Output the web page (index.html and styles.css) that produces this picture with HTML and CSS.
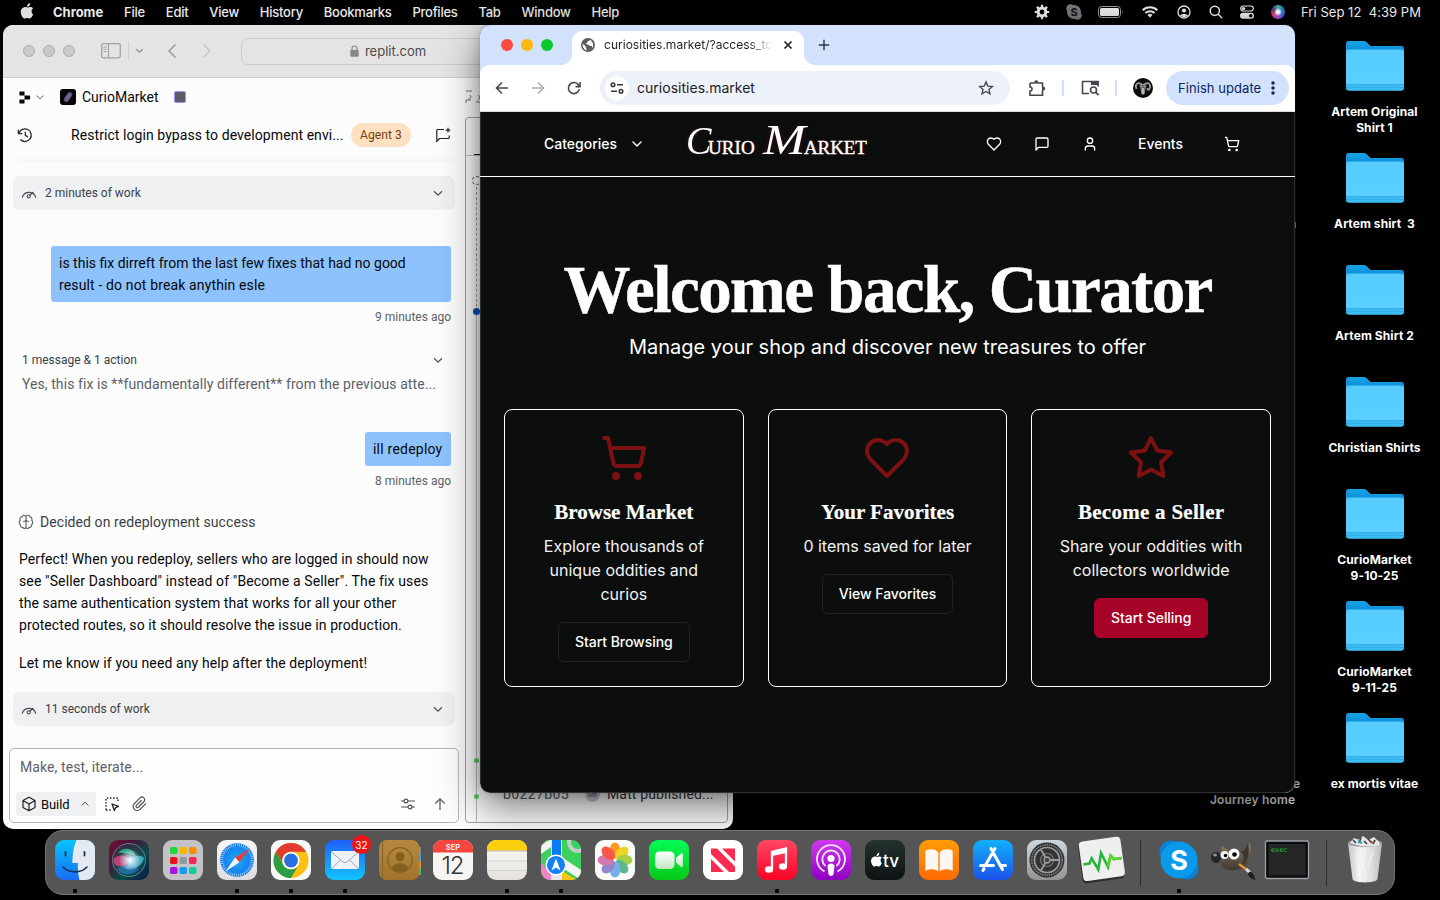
FILE: index.html
```html
<!DOCTYPE html>
<html lang="en">
<head>
<meta charset="utf-8">
<title>Desktop</title>
<link rel="stylesheet" href="styles.css">
</head>
<body>
<svg class="defs" width="0" height="0">
  <defs>
    <linearGradient id="gFolder" x1="0" y1="0" x2="0" y2="1"><stop offset="0" stop-color="#56ccff"/><stop offset="1" stop-color="#5ad0ff"/></linearGradient>
    <linearGradient id="gFolderBack" x1="0" y1="0" x2="0" y2="1"><stop offset="0" stop-color="#15a5e8"/><stop offset="1" stop-color="#0a7fd0"/></linearGradient>
    <linearGradient id="gFinder" x1="0" y1="0" x2="0" y2="1"><stop offset="0" stop-color="#06c5fb"/><stop offset="1" stop-color="#1a6bf5"/></linearGradient>
    <linearGradient id="gSilver" x1="0" y1="0" x2="0" y2="1"><stop offset="0" stop-color="#f7f7f7"/><stop offset="1" stop-color="#dcdde0"/></linearGradient>
    <linearGradient id="gMail" x1="0" y1="0" x2="0" y2="1"><stop offset="0" stop-color="#1e60f5"/><stop offset="1" stop-color="#12c4fd"/></linearGradient>
    <linearGradient id="gSky" x1="0" y1="0" x2="0" y2="1"><stop offset="0" stop-color="#11b0fb"/><stop offset="1" stop-color="#1c52ea"/></linearGradient>
    <linearGradient id="gGreen" x1="0" y1="0" x2="0" y2="1"><stop offset="0" stop-color="#06fb57"/><stop offset="1" stop-color="#06c917"/></linearGradient>
    <linearGradient id="gMusic" x1="0" y1="0" x2="0" y2="1"><stop offset="0" stop-color="#fd4864"/><stop offset="1" stop-color="#fa0326"/></linearGradient>
    <linearGradient id="gPod" x1="0" y1="0" x2="0" y2="1"><stop offset="0" stop-color="#cf39ee"/><stop offset="1" stop-color="#8f02c0"/></linearGradient>
    <linearGradient id="gTv" x1="0" y1="0" x2="0" y2="1"><stop offset="0" stop-color="#23332f"/><stop offset="1" stop-color="#0d1113"/></linearGradient>
    <linearGradient id="gBooks" x1="0" y1="0" x2="0" y2="1"><stop offset="0" stop-color="#ff9d05"/><stop offset="1" stop-color="#ff6a05"/></linearGradient>
    <linearGradient id="gGear" x1="0" y1="0" x2="0" y2="1"><stop offset="0" stop-color="#cbd7e0"/><stop offset="1" stop-color="#959493"/></linearGradient>
    <linearGradient id="gNotes" x1="0" y1="0" x2="0" y2="1"><stop offset="0" stop-color="#fbfbf9"/><stop offset="1" stop-color="#e5e2dc"/></linearGradient>
    <linearGradient id="gWhite" x1="0" y1="0" x2="0" y2="1"><stop offset="0" stop-color="#ffffff"/><stop offset="1" stop-color="#c2e6c4"/></linearGradient>
    <linearGradient id="gContacts" x1="0" y1="0" x2="0" y2="1"><stop offset="0" stop-color="#b5893f"/><stop offset="1" stop-color="#a0742c"/></linearGradient>
    <radialGradient id="gCompass"><stop offset="0" stop-color="#1caafa"/><stop offset="1" stop-color="#1479ea"/></radialGradient>
    <linearGradient id="gSiri" x1="0" y1="0" x2="1" y2="1"><stop offset="0" stop-color="#7a1038"/><stop offset=".3" stop-color="#4a1238"/><stop offset=".62" stop-color="#0b4a48"/><stop offset="1" stop-color="#0a1748"/></linearGradient>
    <radialGradient id="gGlow"><stop offset="0" stop-color="#fff"/><stop offset=".35" stop-color="#dff6ff" stop-opacity=".75"/><stop offset="1" stop-color="#fff" stop-opacity="0"/></radialGradient>
    <linearGradient id="gGimp" x1="0" y1="0" x2="0" y2="1"><stop offset="0" stop-color="#8b8069"/><stop offset="1" stop-color="#3e382d"/></linearGradient>
    <linearGradient id="gTrash" x1="0" y1="0" x2="1" y2="0"><stop offset="0" stop-color="#c5c6c9"/><stop offset=".35" stop-color="#f4f4f4"/><stop offset=".7" stop-color="#dedee0"/><stop offset="1" stop-color="#b9babd"/></linearGradient>
    <clipPath id="cIcon"><rect width="40" height="40" rx="9"/></clipPath>
    <symbol id="folder" viewBox="0 0 60 52">
      <path d="M1 12V4a3 3 0 0 1 3-3h14c2 0 3 .6 4.200 1.700l2.600 2.500c.8.700 1.600.9 2.700.9H56a3 3 0 0 1 3 3V16H1z" fill="url(#gFolderBack)"/>
      <path d="M1 12a2.500 2.500 0 0 1 2.500-2.500h53A2.500 2.500 0 0 1 59 12v35.500a3 3 0 0 1-3 3H4a3 3 0 0 1-3-3z" fill="url(#gFolder)"/>
      <path d="M1 44h58v3.500a3 3 0 0 1-3 3H4a3 3 0 0 1-3-3z" fill="#3cbaf2"/>
      <path d="M1 44.500h58M1 47.500h58" stroke="#2fabe5" stroke-width=".8"/>
    </symbol>
    <symbol id="chev" viewBox="0 0 24 24"><path d="m4 8.500 8 8 8-8" fill="none" stroke="currentColor" stroke-width="2.300"/></symbol>
    <symbol id="gauge" viewBox="0 0 16 16"><path d="M1.300 12.300A7 7 0 0 1 14.700 12.300M8.800 10.300l3.300-3" fill="none" stroke="currentColor" stroke-width="1.200" stroke-linecap="round"/><circle cx="7.700" cy="11.300" r="1.600" fill="none" stroke="currentColor" stroke-width="1.100"/></symbol>
    <symbol id="cart" viewBox="0 0 24 24"><g fill="none" stroke="currentColor" stroke-width="2" stroke-linecap="round" stroke-linejoin="round"><circle cx="8" cy="21" r="1"/><circle cx="19" cy="21" r="1"/><path d="M2.050 2.050h2l2.660 12.420a2 2 0 0 0 2 1.580h9.780a2 2 0 0 0 1.950-1.570l1.650-7.430H5.120"/></g></symbol>
    <symbol id="heart" viewBox="0 0 24 24"><path d="M19 14c1.490-1.460 3-3.210 3-5.500A5.500 5.500 0 0 0 16.500 3c-1.760 0-3 .5-4.500 2-1.500-1.500-2.740-2-4.500-2A5.500 5.500 0 0 0 2 8.500c0 2.300 1.500 4.050 3 5.500l7 7Z" fill="none" stroke="currentColor" stroke-width="2" stroke-linecap="round" stroke-linejoin="round"/></symbol>
    <symbol id="star" viewBox="0 0 24 24"><path d="m12 2 3.090 6.260L22 9.270l-5 4.870 1.180 6.880L12 17.770l-6.180 3.250L7 14.140 2 9.270l6.910-1.010z" fill="none" stroke="currentColor" stroke-width="2" stroke-linecap="round" stroke-linejoin="round"/></symbol>
    <symbol id="apple" viewBox="0 0 14 17"><path d="M11.600 9c0-1.700 1.300-2.500 1.400-2.600-.8-1.200-2-1.300-2.500-1.300-1-.1-2 .6-2.600.6-.5 0-1.300-.6-2.200-.6C3 5.200.8 7 .8 9.900c0 3 2.200 6.600 3.900 6.600.9 0 1.300-.6 2.500-.6s1.500.6 2.500.6c1.400 0 2.900-2.700 3.400-4-.1 0-1.500-.7-1.500-3.500zM9.400 3.700C10 3 10.300 2 10.200.9c-.9.100-1.800.6-2.300 1.300-.6.700-1 1.600-.9 2.500.9.100 1.800-.4 2.400-1z" fill="currentColor"/></symbol>
  </defs>
</svg>

<div class="desktop">
  <header class="menubar">
    <svg class="apple"><use href="#apple"/></svg>
    <nav class="menus">
      <b>Chrome</b><span>File</span><span>Edit</span><span>View</span><span>History</span><span>Bookmarks</span><span>Profiles</span><span>Tab</span><span>Window</span><span>Help</span>
    </nav>
    <div class="status">
      <svg class="s1" width="16" height="16" viewBox="0 0 16 16"><circle cx="8" cy="8" r="3.900" fill="none" stroke="#e6e6e6" stroke-width="3"/><path d="M8 .8v14.400M.8 8h14.400M2.900 2.900l10.200 10.200M13.100 2.900 2.900 13.100" stroke="#e6e6e6" stroke-width="2.200"/><circle cx="8" cy="8" r="2.400" fill="#000"/></svg>
      <svg class="s2" width="16" height="16" viewBox="0 0 16 16"><circle cx="8" cy="8" r="7" fill="#777"/><circle cx="4.500" cy="4.500" r="4.200" fill="#777"/><circle cx="11.500" cy="11.500" r="4.200" fill="#777"/><text x="8" y="12" text-anchor="middle" class="skype-mini">S</text></svg>
      <svg class="s3" width="25" height="12" viewBox="0 0 25 12"><rect x=".5" y=".5" width="22" height="11" rx="3" fill="none" stroke="#999"/><rect x="2" y="2" width="19" height="8" rx="1.500" fill="#e6e6e6"/><path d="M24 4v4q1.200-2 0-4" fill="#999"/></svg>
      <svg class="s4" width="16" height="12" viewBox="0 0 16 12"><g fill="none" stroke="#e6e6e6" stroke-width="2"><path d="M.7 4.200a10.500 10.500 0 0 1 14.600 0M3.400 7a6.600 6.600 0 0 1 9.200 0"/></g><path d="M5.500 9a3.600 3.600 0 0 1 5 0L8 11.700z" fill="#e6e6e6"/></svg>
      <svg class="s5" width="14" height="14" viewBox="0 0 14 14"><circle cx="7" cy="7" r="6" fill="none" stroke="#e6e6e6" stroke-width="1.300"/><circle cx="7" cy="5.500" r="2.100" fill="#e6e6e6"/><path d="M3 10.600a4.500 3.500 0 0 1 8 0A6 6 0 0 1 3 10.600" fill="#e6e6e6"/></svg>
      <svg class="s6" width="14" height="14" viewBox="0 0 14 14"><g fill="none" stroke="#e6e6e6" stroke-width="1.500"><circle cx="5.800" cy="5.800" r="4.600"/><path d="m9.200 9.200 4 4"/></g></svg>
      <svg class="s7" width="14" height="14" viewBox="0 0 14 14"><rect x=".7" y="1" width="12.600" height="5" rx="2.500" fill="none" stroke="#e6e6e6" stroke-width="1.200"/><circle cx="3.500" cy="3.500" r="1.600" fill="#e6e6e6"/><rect x="0" y="7.800" width="14" height="6" rx="3" fill="#e6e6e6"/><circle cx="10.800" cy="10.800" r="1.800" fill="#000"/></svg>
      <i class="siri-mini"></i>
      <span class="clock">Fri Sep 12&nbsp; 4:39 PM</span>
    </div>
  </header>

  <div class="peek peek-n">n</div>
  <div class="peek peek-e">e</div>
  <div class="peek peek-j">Journey home</div>
  <aside class="files">
    <div class="file"><svg><use href="#folder"/></svg><span>Artem Original<br>Shirt 1</span></div>
    <div class="file"><svg><use href="#folder"/></svg><span>Artem shirt&nbsp; 3</span></div>
    <div class="file"><svg><use href="#folder"/></svg><span>Artem Shirt 2</span></div>
    <div class="file"><svg><use href="#folder"/></svg><span>Christian Shirts</span></div>
    <div class="file"><svg><use href="#folder"/></svg><span>CurioMarket<br>9-10-25</span></div>
    <div class="file"><svg><use href="#folder"/></svg><span>CurioMarket<br>9-11-25</span></div>
    <div class="file"><svg><use href="#folder"/></svg><span>ex mortis vitae</span></div>
  </aside>

  <section class="safari">
    <div class="safari-bar">
      <i class="dot"></i><i class="dot"></i><i class="dot"></i>
      <svg class="sidebar-ic" width="20" height="16" viewBox="0 0 20 16"><rect x=".7" y=".7" width="18.600" height="14.200" rx="1.800" fill="none" stroke="#a2a2a2" stroke-width="1.300"/><path d="M7.500 1v14" stroke="#a2a2a2" stroke-width="1.200"/><path d="M2.600 4h3M2.600 6.300h3M2.600 8.600h3" stroke="#a2a2a2"/></svg>
      <i class="vline"></i>
      <svg class="mini-chev" width="9" height="12"><path d="m1.200 4 3.300 3.200L7.800 4" fill="none" stroke="#999" stroke-width="1.500"/></svg>
      <svg class="nav-b" width="10" height="16"><path d="M8.500 1.500 2 8l6.500 6.500" fill="none" stroke="#999" stroke-width="1.500"/></svg>
      <svg class="nav-f" width="10" height="16"><path d="M1.500 1.500 8 8l-6.500 6.500" fill="none" stroke="#c4c4c4" stroke-width="1.500"/></svg>
      <div class="safari-url"><svg width="9" height="12" viewBox="0 0 9 12"><rect x=".3" y="5" width="8.400" height="6.800" rx="1.200" fill="#868686"/><path d="M2 5.500V3.500a2.500 2.500 0 0 1 5 0v2" fill="none" stroke="#868686" stroke-width="1.200"/></svg>replit.com</div>
    </div>
    <div class="workspace">
      <div class="chat">
        <div class="ws-head">
          <svg width="12" height="13" viewBox="0 0 12 13"><path d="M1 .5h4.500v4H1a.6.600 0 0 1-.6-.6V1.100A.6.600 0 0 1 1 .5zM5.500 4.500h5a.6.600 0 0 1 .6.600v2.800a.6.600 0 0 1-.6.600h-5zM1 8.500h4.500v4H1a.6.600 0 0 1-.6-.6V9.100a.6.600 0 0 1 .6-.6z" fill="#050608"/></svg>
          <svg class="c1" width="10" height="10"><use href="#chev"/></svg>
          <svg class="app-ic" width="16" height="16" viewBox="0 0 16 16"><rect width="16" height="16" rx="3" fill="#050506"/><g transform="rotate(35 8 8)"><rect x="5.600" y="2.500" width="5" height="11" rx="2.500" fill="#5c4d7d"/><path d="M8 3.500v9M6.600 5v6M9.500 5v6" stroke="#9b8bbb" stroke-width=".5"/></g></svg>
          <span class="app-name">CurioMarket</span>
          <i class="stop"></i>
        </div>
        <div class="thread-head">
          <svg width="16" height="16" viewBox="0 0 24 24"><g fill="none" stroke="#24272c" stroke-width="1.900"><path d="M2 4v6h6M2.800 9.500A9.500 9.500 0 1 1 5 18.800M12.500 7v5.500l4 2.500"/></g></svg>
          <span class="thread-title">Restrict login bypass to development envi...</span>
          <span class="agent">Agent 3</span>
          <svg class="newchat" width="16" height="16" viewBox="0 0 16 16"><path d="M9 2.500H2.800a1 1 0 0 0-1 1v10.700l2.600-2.700h8.800a1 1 0 0 0 1-1V8.500M13 .8v4.600M10.700 3.100h4.600" fill="none" stroke="#202328" stroke-width="1.200"/></svg>
        </div>
        <div class="scroll-edge"></div>
        <div class="work"><svg><use href="#gauge"/></svg><span class="w1">2 minutes of work</span><svg class="wc"><use href="#chev"/></svg></div>
        <div class="bubble">is this fix dirreft from the last few fixes that had no good<br><span class="b2">result - do not break anythin esle</span></div>
        <div class="ago">9 minutes ago</div>
        <div class="actions"><span>1 message &amp; 1 action</span><svg><use href="#chev"/></svg></div>
        <div class="preview">Yes, this fix is **fundamentally different** from the previous atte...</div>
        <div class="bubble small">ill redeploy</div>
        <div class="ago">8 minutes ago</div>
        <div class="decided"><svg width="16" height="16" viewBox="0 0 16 16"><g fill="none" stroke="#5a5e66" stroke-width="1.100"><path d="M8 2.500v11M8 2.500C7.300.7 4.500.8 4 2.900 2.200 3.200 1.600 5 2.300 6.300.8 7.400.9 9.800 2.400 10.700 2 12.500 3.600 13.900 5 13.500c.8 1.500 2.500 1.300 3 0M8 2.500c.7-1.800 3.500-1.700 4 .4 1.800.3 2.400 2.100 1.700 3.400 1.500 1.100 1.400 3.500-.1 4.400.4 1.800-1.200 3.200-2.600 2.800-.8 1.500-2.500 1.300-3 0M5 7.500c1.500 0 2.500-.5 3-1.500.5 1 1.500 1.500 3 1.500"/></g></svg>Decided on redeployment success</div>
        <div class="reply">
          <p><span class="r1">Perfect! When you redeploy, sellers who are logged in should now</span><br><span class="r2">see "Seller Dashboard" instead of "Become a Seller". The fix uses</span><br><span class="r3">the same authentication system that works for all your other</span><br><span class="r1">protected routes, so it should resolve the issue in production.</span></p>
          <p class="r5">Let me know if you need any help after the deployment!</p>
        </div>
        <div class="work second"><svg><use href="#gauge"/></svg><span>11 seconds of work</span><svg class="wc"><use href="#chev"/></svg></div>
        <div class="composer">
          <div class="ph">Make, test, iterate...</div>
          <div class="tools">
            <span class="build"><svg width="16" height="16" viewBox="0 0 16 16"><path d="M8 1.200 14 4.500v7L8 14.800 2 11.500v-7zM2 4.500 8 8l6-3.500M8 8v6.800" fill="none" stroke="#1c1f24" stroke-width="1.200" stroke-linejoin="round"/></svg><em>Build</em><svg class="up" width="10" height="10"><use href="#chev"/></svg></span>
            <svg class="sel" width="16" height="16" viewBox="0 0 16 16"><path d="M2 14V2h12v4M2 14h5" fill="none" stroke="#202328" stroke-width="1.400" stroke-dasharray="1.500 1.700"/><path d="m8 8 6.500 2.400-2.900 1.200-1.200 2.900z" fill="none" stroke="#202328" stroke-width="1.300" stroke-linejoin="round"/></svg>
            <svg class="clip" width="16" height="16" viewBox="0 0 24 24"><path d="m21 11-9 9a6 6 0 0 1-8.500-8.500l8.600-8.600a4 4 0 0 1 5.700 5.700l-8.600 8.600a2 2 0 0 1-2.800-2.800l8-8" fill="none" stroke="#4c5058" stroke-width="1.800"/></svg>
            <svg class="sliders" width="16" height="14" viewBox="0 0 16 14"><g fill="none" stroke="#4c5058" stroke-width="1.200"><path d="M1 4h3M8 4h7M1 10h7M12 10h3"/><circle cx="6" cy="4" r="1.900"/><circle cx="10" cy="10" r="1.900"/></g></svg>
            <svg class="send" width="12" height="14" viewBox="0 0 12 14"><path d="M6 13V2M1.300 6.500 6 1.800l4.700 4.700" fill="none" stroke="#5d6168" stroke-width="1.300"/></svg>
          </div>
        </div>
      </div>
      <div class="side">
        <div class="side-head"><svg width="26" height="18" viewBox="0 0 26 18"><path d="M1 3h6M5 7c2 3 0 4-2 4M1 15v-3h5M13 7l4 5M17 7l-4 5" fill="none" stroke="#777" stroke-width="1"/><path d="M11 14h12" stroke="#8a6a2a"/></svg></div>
        <div class="panel">
          <div class="panel-tabs"><i></i></div>
          <div class="timeline"><i class="ring"></i><i class="dash"></i><i class="blue"></i><i class="line"></i><i class="g g1"></i><i class="g g2"></i></div>
          <div class="commit"><span class="hash">b0227b05</span><span class="av">MB</span><span class="who">Matt published...</span></div>
        </div>
      </div>
    </div>
  </section>

  <section class="chrome">
    <div class="tabstrip">
      <i class="tl red"></i><i class="tl yel"></i><i class="tl grn"></i>
      <div class="tab">
        <svg width="14" height="14" viewBox="0 0 14 14"><circle cx="7" cy="7" r="7" fill="#5a5e63"/><path d="M8.800 1.800c-.2 1.500-2 1-2.300 2.300-.2.900-1.300.8-1.300 1.700 0 1.100 2.600.4 3 1.400.3.900 1.700.6 2.500.8.700.2 1 .9.600 1.900-.7 1.400-1.600 1.900-2.700 2.400 1.600-.3 3-1.700 3.500-3.200.6-2.700-.6-5.900-3.300-7.300zM1.500 5.700c1 1.200 2.700 1.500 3.200 2.700.3.800-.2 1.200.5 1.800.6.600.4 1.400.2 2.200C3 11.600 1.200 9 1.500 5.700z" fill="#fff"/></svg>
        <span class="tab-title">curiosities.market/?access_to</span>
        <svg class="x" width="10" height="10"><path d="m1.500 1.500 7 7M8.500 1.500l-7 7" stroke="#1f2226" stroke-width="1.700"/></svg>
      </div>
      <svg class="plus" width="12" height="12"><path d="M6 .8v10.400M.8 6h10.400" stroke="#33383f" stroke-width="1.500"/></svg>
    </div>
    <div class="toolbar">
      <svg class="t-back" width="14" height="14" viewBox="0 0 14 14"><path d="M13 7H2M7 1.500 1.500 7 7 12.500" fill="none" stroke="#44474b" stroke-width="1.600"/></svg>
      <svg class="t-fwd" width="14" height="14" viewBox="0 0 14 14"><path d="M1 7h11M7 1.500 12.500 7 7 12.500" fill="none" stroke="#adafb2" stroke-width="1.600"/></svg>
      <svg class="t-rel" width="14" height="14" viewBox="0 0 14 14"><path d="M12.300 8.200A5.500 5.500 0 1 1 11.500 4L13 5.500M13 1v4.600H8.500" fill="none" stroke="#44474b" stroke-width="1.600"/></svg>
      <div class="omni">
        <span class="site"><svg width="14" height="12" viewBox="0 0 14 12"><g fill="none" stroke="#33363a" stroke-width="1.500"><circle cx="3" cy="2.800" r="1.800"/><path d="M7 2.800h6M1 9.200h6"/><circle cx="11" cy="9.200" r="1.800"/></g></svg></span>
        <span class="addr">curiosities.market</span>
        <svg class="bm" width="16" height="16" viewBox="0 0 24 24"><path d="m12 2.800 2.700 6.300 6.900.6-5.200 4.500 1.600 6.700-6-3.600-6 3.600 1.600-6.700-5.200-4.500 6.900-.6z" fill="none" stroke="#44474b" stroke-width="2"/></svg>
      </div>
      <svg class="ext" width="18" height="18" viewBox="0 0 18 18"><path d="M2 4h4.700M9.700 4h4.800v4.200M14.500 11v5.200H2V12a2 2 0 0 0 0-4V4" fill="none" stroke="#44474b" stroke-width="1.600"/><path d="M6.200 4.500V3.200a2 2 0 0 1 4 0v1.300zM14 7.500h1.200a2 2 0 0 1 0 4H14z" fill="#44474b"/></svg>
      <i class="sep"></i>
      <svg class="lens" width="18" height="16" viewBox="0 0 18 16"><path d="M8 13.500H1.500v-12H17v5" fill="none" stroke="#44474b" stroke-width="1.600"/><path d="M10 1h7.500v4H10z" fill="#44474b"/><circle cx="12.500" cy="10" r="3" fill="#fff" stroke="#44474b" stroke-width="1.600"/><path d="m14.600 12.200 3 3" stroke="#44474b" stroke-width="1.700"/></svg>
      <i class="sep"></i>
      <svg class="avatar" width="20" height="20" viewBox="0 0 20 20"><circle cx="10" cy="10" r="10" fill="#0c0c0c"/><path d="M3.500 11C1.500 6 5 4 8 6l1.500 1h1L12 6c3-2 6.500 0 4.500 5-.8 1.500-2.300 1-2-1" fill="none" stroke="#9a9a9a" stroke-width="1.800"/><path d="M6.500 7.500h7L12 13l-.8 3.500H8.800L8 13z" fill="#b5b5b5"/><path d="M8 8.500v4M12 8.500v4M10 7v3" stroke="#222" stroke-width=".9"/></svg>
      <span class="update"><em>Finish update</em><svg width="4" height="16"><g fill="#0a2463"><circle cx="2" cy="3" r="1.700"/><circle cx="2" cy="8" r="1.700"/><circle cx="2" cy="13" r="1.700"/></g></svg></span>
    </div>
    <div class="page">
      <div class="site-nav">
        <span class="cat">Categories</span>
        <svg class="n-chev" width="16" height="16" viewBox="0 0 24 24"><path d="m6 9 6 6 6-6" fill="none" stroke="#fff" stroke-width="2" stroke-linecap="round" stroke-linejoin="round"/></svg>
        <span class="brand"><i class="cc">C</i><span class="urio">URIO</span><i class="mm">M</i><span class="arket">ARKET</span></span>
        <svg class="n-heart"><use href="#heart"/></svg>
        <svg class="n-msg" viewBox="0 0 24 24"><path d="M21 15a2 2 0 0 1-2 2H7l-4 4V5a2 2 0 0 1 2-2h14a2 2 0 0 1 2 2z" fill="none" stroke="#fff" stroke-width="2" stroke-linejoin="round"/></svg>
        <svg class="n-user" viewBox="0 0 24 24"><g fill="none" stroke="#fff" stroke-width="2" stroke-linecap="round"><path d="M19 21v-2a4 4 0 0 0-4-4H9a4 4 0 0 0-4 4v2"/><circle cx="12" cy="7" r="4"/></g></svg>
        <span class="events">Events</span>
        <svg class="n-cart"><use href="#cart"/></svg>
      </div>
      <div class="hero">
        <h1>Welcome back, Curator</h1>
        <p>Manage your shop and discover new treasures to offer</p>
      </div>
      <div class="cards">
        <div class="card"><svg><use href="#cart"/></svg><h3>Browse Market</h3><p>Explore thousands of unique oddities and curios</p><span class="btn">Start Browsing</span></div>
        <div class="card"><svg><use href="#heart"/></svg><h3>Your Favorites</h3><p>0 items saved for later</p><span class="btn">View Favorites</span></div>
        <div class="card"><svg><use href="#star"/></svg><h3 class="sell">Become a Seller</h3><p>Share your oddities with collectors worldwide</p><span class="btn primary">Start Selling</span></div>
      </div>
    </div>
  </section>

  <footer class="dock">
    <div class="app on"><svg viewBox="0 0 40 40"><g clip-path="url(#cIcon)"><rect width="40" height="40" fill="url(#gFinder)"/><path d="M21.500 0C18.500 7 17.500 14 17.300 23h5.500c-.2 6 .3 11 1.700 17H40V0z" fill="#e4e9f2"/></g><path d="M10.500 12v3.500M29.500 12v3.500" stroke="#17324f" stroke-width="1.800" stroke-linecap="round"/><path d="M8 27c6 6.500 18 6.500 24 0" fill="none" stroke="#17324f" stroke-width="1.600" stroke-linecap="round"/></svg></div>
    <div class="app"><svg viewBox="0 0 40 40"><rect width="40" height="40" rx="9" fill="url(#gSiri)"/><circle cx="20" cy="20" r="16.500" fill="#0e5a5e" fill-opacity=".4" stroke="#7fb5b0" stroke-opacity=".6"/><ellipse cx="12" cy="21" rx="7.500" ry="5.500" fill="#ea4a86" opacity=".75"/><path d="M9 13c6-7 16-5 18 4-5-4-11-4-18-4z" fill="#2fb890" opacity=".85"/><path d="M17 19c8-3 15-5 18-1-2 9-10 12-19 10 4-2 5-5 1-9z" fill="#55cdea" opacity=".7"/><path d="M8 29c6-5 16-6 22 0-6 7-17 7-22 0z" fill="#2f7fd0" opacity=".6"/><circle cx="21" cy="20" r="11" fill="url(#gGlow)"/></svg></div>
    <div class="app"><svg viewBox="0 0 40 40"><rect width="40" height="40" rx="9" fill="#c3c3c5"/><rect x="7" y="7" width="7.500" height="7" rx="1.700" fill="#1fd636"/><rect x="16.500" y="7" width="7.500" height="7" rx="1.700" fill="#fbb508"/><rect x="26" y="7" width="7.500" height="7" rx="1.700" fill="#fb8b07"/><rect x="7" y="17" width="7.500" height="7" rx="1.700" fill="#e8101c"/><rect x="16.500" y="17" width="7.500" height="7" rx="1.700" fill="#8f999e"/><rect x="26" y="17" width="7.500" height="7" rx="1.700" fill="#fb2159"/><rect x="7" y="27" width="7.500" height="7" rx="1.700" fill="#a612e0"/><rect x="16.500" y="27" width="7.500" height="7" rx="1.700" fill="#149cfb"/><rect x="26" y="27" width="7.500" height="7" rx="1.700" fill="#17ca9a"/></svg></div>
    <div class="app on"><svg viewBox="0 0 40 40"><rect width="40" height="40" rx="9" fill="url(#gSilver)"/><circle cx="20" cy="20" r="16.800" fill="url(#gCompass)"/><circle cx="20" cy="20" r="15" fill="none" stroke="#d7ecff" stroke-width="2.600" stroke-dasharray=".6 1.360"/><path d="M32 9 18 17.500l4.500 4.700z" fill="#f23a36"/><path d="M8.500 31.500 18 17.500l4.500 4.700z" fill="#f2f4f7"/></svg></div>
    <div class="app on"><svg viewBox="0 0 40 40"><rect width="40" height="40" rx="9" fill="#f8f8f8"/><circle cx="20" cy="20.500" r="17.500" fill="#fbbf12"/><path d="M4.850 11.750A17.500 17.500 0 0 1 35.150 11.750H20a8.750 8.750 0 0 0-7.600 13.100z" fill="#e33b2e"/><path d="M4.850 11.750A17.500 17.500 0 0 0 20 38l7.600-13.100a8.750 8.750 0 0 1-15.200 0z" fill="#2a9d46"/><circle cx="20" cy="20.500" r="8.700" fill="#fff"/><circle cx="20" cy="20.500" r="6.900" fill="#2a6fe0"/></svg></div>
    <div class="app on"><svg viewBox="0 0 40 40"><rect width="40" height="40" rx="9" fill="url(#gMail)"/><rect x="6" y="11" width="28" height="18" rx="2" fill="#eef1f5"/><path d="m6.500 12 11.500 10q2 1.500 4 0L33.500 12M7 28.500l8.500-8.700M33 28.500l-8.500-8.700" fill="none" stroke="#9ca7b3" stroke-width="1"/></svg><span class="badge">32</span></div>
    <div class="app"><svg viewBox="0 0 40 40"><path d="M38 7h3.500v8H38z" fill="#a9a9ab"/><path d="M38 14h4v8h-4z" fill="#3ca8e0"/><path d="M38 21h4v8h-4z" fill="#ee9124"/><path d="M38 28h4v7h-4z" fill="#47c35b"/><rect width="40.500" height="40" rx="8" fill="url(#gContacts)"/><path d="M3.500 2v36" stroke="#8c6422"/><circle cx="21" cy="20" r="12.300" fill="none" stroke="#85601f" stroke-width="1.200"/><circle cx="21" cy="16.800" r="4.600" fill="#85601f"/><path d="M12.500 28.500c2-7 15-7 17 0a12.300 12.300 0 0 1-17 0" fill="#85601f"/></svg></div>
    <div class="app"><svg viewBox="0 0 40 40"><g clip-path="url(#cIcon)"><rect width="40" height="40" fill="#f6f5f4"/><rect width="40" height="12.500" fill="#f9453f"/></g><text x="20" y="9.500" text-anchor="middle" class="cal-m">SEP</text><text x="19.500" y="34" text-anchor="middle" class="cal-d">12</text></svg></div>
    <div class="app on"><svg viewBox="0 0 40 40"><g clip-path="url(#cIcon)"><rect width="40" height="40" fill="url(#gNotes)"/><rect width="40" height="10.500" fill="#fdce0c"/><path d="M0 11h40" stroke="#b9b4a8"/><path d="M0 21h40M0 30.500h40" stroke="#cfccc6" stroke-width=".8"/></g></svg></div>
    <div class="app on"><svg viewBox="0 0 40 40"><g clip-path="url(#cIcon)"><rect width="40" height="40" fill="#3bd15c"/><path d="M0 22 14 40H0z" fill="#f184c8"/><path d="M10 40V0h11v40z" fill="#e8e8ea"/><path d="M11 0h9v20h-9z" fill="#0a7bf5"/><path d="M0 0h10v7z" fill="#9ce8a5"/><path d="m22 18 18 12v10L20 27z" fill="#f4f4f4"/><path d="M21 31v9h15z" fill="#fdc415"/><circle cx="37" cy="2" r="9" fill="none" stroke="#c3cbcc" stroke-width="4"/><path d="M0 5v9l10-7V0z" fill="#f4f4f4"/></g><circle cx="15" cy="25" r="9.800" fill="#1481f8" stroke="#fff" stroke-width="1.500"/><path d="m15 18.500 4.500 12-4.500-3-4.500 3z" fill="#fff"/></svg></div>
    <div class="app"><svg viewBox="0 0 40 40"><rect width="40" height="40" rx="9" fill="#fbfbfb"/><g opacity=".95"><ellipse cx="20" cy="10.500" rx="5.300" ry="8" fill="#fb9713"/><ellipse cx="20" cy="10.500" rx="5.300" ry="8" fill="#ecd417" transform="rotate(45 20 20)"/><ellipse cx="20" cy="10.500" rx="5.300" ry="8" fill="#a3cf3c" transform="rotate(90 20 20)"/><ellipse cx="20" cy="10.500" rx="5.300" ry="8" fill="#54b489" transform="rotate(135 20 20)"/><ellipse cx="20" cy="10.500" rx="5.300" ry="8" fill="#6eaee6" transform="rotate(180 20 20)"/><ellipse cx="20" cy="10.500" rx="5.300" ry="8" fill="#917fc8" transform="rotate(225 20 20)"/><ellipse cx="20" cy="10.500" rx="5.300" ry="8" fill="#d572ac" transform="rotate(270 20 20)"/><ellipse cx="20" cy="10.500" rx="5.300" ry="8" fill="#f5503f" transform="rotate(315 20 20)"/></g></svg></div>
    <div class="app"><svg viewBox="0 0 40 40"><rect width="40" height="40" rx="9" fill="url(#gGreen)"/><rect x="6" y="11.500" width="19.500" height="17.500" rx="4.500" fill="url(#gWhite)"/><path d="m27 18 5-4.500q1.800-1 1.800 1v11.500q0 2-1.800 1L27 22.500z" fill="url(#gWhite)"/></svg></div>
    <div class="app"><svg viewBox="0 0 40 40"><rect width="40" height="40" rx="9" fill="#fff"/><path d="M19 8.500h13V21.500zM8 19v13h13z" fill="#fb2c50"/><path d="M8 8.500h6L32 26.500v5.500h-6L8 14z" fill="#fb2c50"/></svg></div>
    <div class="app on"><svg viewBox="0 0 40 40"><rect width="40" height="40" rx="9" fill="url(#gMusic)"/><path d="M15 29V12l14-3.500v17" fill="none" stroke="#fff" stroke-width="2.300"/><path d="M15 11.500 29.500 8v5L15 16z" fill="#fff"/><ellipse cx="12" cy="29.500" rx="4.100" ry="3.300" fill="#fff"/><ellipse cx="26" cy="26.500" rx="4.100" ry="3.300" fill="#fff"/></svg></div>
    <div class="app"><svg viewBox="0 0 40 40"><rect width="40" height="40" rx="9" fill="url(#gPod)"/><g fill="none" stroke="#f3e0fa" stroke-width="1.900"><path d="M13.500 31.500a14 14 0 1 1 13 0"/><path d="M14.500 26a8.700 8.700 0 1 1 11 0"/></g><circle cx="20" cy="18.500" r="3.600" fill="#fff"/><path d="M16.500 26.500c0-4 7-4 7 0L22.500 34c-.5 2.500-4.500 2.500-5 0z" fill="#fff"/></svg></div>
    <div class="app"><svg viewBox="0 0 40 40"><rect width="40" height="40" rx="9" fill="url(#gTv)"/><svg x="5" y="12" width="13" height="15" viewBox="0 0 14 17" color="#fff"><use href="#apple"/></svg><text x="18" y="26.500" class="tv">tv</text></svg></div>
    <div class="app"><svg viewBox="0 0 40 40"><rect width="40" height="40" rx="9" fill="url(#gBooks)"/><path d="M19.300 12.500c-2-4-12-4.500-13-1V31c3-2.500 11-2.500 13 .5zM20.700 12.500c2-4 12-4.500 13-1V31c-3-2.500-11-2.500-13 .5z" fill="#fbf7f2"/></svg></div>
    <div class="app"><svg viewBox="0 0 40 40"><rect width="40" height="40" rx="9" fill="url(#gSky)"/><g fill="none" stroke="#fff" stroke-width="3" stroke-linecap="round"><path d="M22 8.500 12.500 25M18 8.500 29.500 29.500M7.500 25.500h13M27 25.500h5.500M11 28.500l-1 2"/></g></svg></div>
    <div class="app"><svg viewBox="0 0 40 40"><rect width="40" height="40" rx="9" fill="url(#gGear)"/><circle cx="20" cy="20" r="17.500" fill="#333335"/><circle cx="20" cy="20" r="15.300" fill="none" stroke="#8d8e91" stroke-width="1.500" stroke-dasharray="1.300 1"/><circle cx="20" cy="20" r="12.500" fill="none" stroke="#9c9c9c" stroke-width="1.700"/><circle cx="20" cy="20" r="6.500" fill="none" stroke="#78797b" stroke-width="1.200"/><path d="M20 20h12M20 20 14 9.600M20 20l-6 10.400" stroke="#9c9c9c" stroke-width="1.900"/><circle cx="20" cy="20" r="3" fill="#454547" stroke="#9c9c9c" stroke-width="1.300"/></svg></div>
    <div class="app"><svg viewBox="0 0 40 40"><g transform="rotate(-8 20 20)"><rect x="-1" y="1" width="42" height="40" rx="4" fill="#2d2d2d"/><rect x="0" y="-1" width="42" height="40" rx="4" fill="#efefef"/><path d="M2 22h6l3-5 5 12 5-16 5 15 4-11 3 4h8" fill="none" stroke="#26b53c" stroke-width="2.600"/><path d="M26 28l4-11 3 4h8" fill="none" stroke="#5cd42e" stroke-width="2.600"/></g></svg></div>
    <i class="dsep"></i>
    <div class="app on"><svg viewBox="0 0 40 40"><circle cx="12" cy="12" r="11.500" fill="#0c7fd2"/><circle cx="28.500" cy="28.500" r="11" fill="#0c7fd2"/><circle cx="20" cy="20" r="18.500" fill="#0a9aeb"/><text x="20" y="30" text-anchor="middle" class="sk">S</text></svg></div>
    <div class="app"><svg viewBox="0 0 40 40"><path d="M7 22C8 14 9 11 8 6c5 1 7 5 12 6 6 1 14-1 17-10 2 12 1 22-8 26-9 4-20 3-22-6z" fill="url(#gGimp)"/><path d="M35 3c2 11 0 19-6 22 3-6 2-12-3-13 4 0 8-4 9-9z" fill="#3d382f"/><ellipse cx="3" cy="17.500" rx="5" ry="5.500" fill="#22262a"/><ellipse cx="2" cy="15" rx="2" ry="1.500" fill="#8b959c"/><circle cx="11.500" cy="15" r="4" fill="#f3f3f3"/><circle cx="21" cy="14" r="5.500" fill="#fafafa"/><circle cx="12.500" cy="15.500" r="1.700"/><circle cx="21.500" cy="14.500" r="2.300"/><path d="m26 24 8 6" stroke="#e8932f" stroke-width="2.500"/><path d="m33 29 4 3.500" stroke="#d7d7d7" stroke-width="3"/><path d="M36 32c3-1 5 3 6.500 8-4-1-7-3-7.500-6z" fill="#1c1c1c"/></svg></div>
    <div class="app wide"><svg viewBox="0 0 44 40"><rect x=".5" y="1" width="43" height="37.500" rx="1.500" fill="#0a0a0b" stroke="#9aa3aa" stroke-width="1.300"/><rect x="3.500" y="4" width="37" height="31.500" fill="#252626"/><text x="6" y="11.500" class="exec">exec</text></svg></div>
    <i class="dsep"></i>
    <div class="app"><svg viewBox="0 0 40 40"><path d="M3 3h34l-4.500 36c-.6 4.500-24.400 4.500-25 0z" fill="url(#gTrash)"/><ellipse cx="20" cy="3" rx="17" ry="4" fill="#96989c"/><path d="m5 3 4-5 5 2 4-4 5 4 6-3 5 5 1 3q-15 4-30-2z" fill="#e5e6e8"/><path d="m8 0 3 3M16-2l-2 5M23-1l4 4M30 0l-2 4M19 1l3 3" stroke="#443f42" stroke-width="1.700"/><path d="m13 1 4 2" stroke="#2aa6b5" stroke-width="2"/><path d="m26 2 3 1" stroke="#b5522e" stroke-width="2"/><path d="M11 12 14 36M20 9l-3 14 5 14M28 11l-5 15" stroke="#fff" stroke-opacity=".45" stroke-width="1.500" fill="none"/></svg></div>
  </footer>
</div>
</body>
</html>
```
FILE: styles.css
```css
* { box-sizing: border-box; }
body { margin: 0; background: #000; overflow: hidden; font-family: Inter, sans-serif; }
svg { display: block; flex: none; overflow: visible; }
i, em { font-style: normal; }
.defs { position: absolute; }
.desktop { position: relative; width: 1440px; height: 900px; background: #000; overflow: hidden; }

/* menu bar */
.menubar { height: 24px; display: flex; align-items: center; color: #e9e9e9; font-size: 13px; font-weight: 500; padding: 0 19px 0 20px; white-space: nowrap; }
.apple { width: 14px; height: 17px; margin-right: 19px; margin-top: -3px; color: #e0e0e0; }
.menus { display: flex; gap: 20.900px; letter-spacing: -.25px; margin-top: -1px; }
.menus b { font-weight: 700; letter-spacing: -.02px; }
.status { margin-left: auto; display: flex; align-items: center; }
.s1 { margin-right: 16px; } .s2 { margin-right: 16px; } .s3 { margin-right: 19px; } .s4 { margin-right: 19px; }
.s5 { margin-right: 18px; } .s6 { margin-right: 17px; } .s7 { margin-right: 17px; }
.skype-mini { font: 700 11px Inter, sans-serif; fill: #111; }
.siri-mini { width: 14px; height: 14px; border-radius: 50%; margin-right: 16px; background: radial-gradient(circle at 50% 50%, #fff 0 14%, transparent 42%), conic-gradient(#3ab3a4, #1d7fa8, #3a62e0, #a94bd8, #e63c7c, #4a3a6e, #3ab3a4); }
.clock { font-weight: 400; letter-spacing: .04px; margin-top: -1px; }

/* desktop files */
.files { position: absolute; left: 1320px; top: 40px; width: 109px; }
.file { height: 112px; display: flex; flex-direction: column; align-items: center; text-align: center; color: #fff; font-weight: 700; font-size: 12px; line-height: 16px; letter-spacing: .08px; white-space: nowrap; }
.file svg { width: 60px; height: 52px; margin-bottom: 12px; }
.peek { position: absolute; color: #d8d8d8; font: 600 12px/16px Inter, sans-serif; white-space: nowrap; }
.peek-n { left: 1289px; top: 216px; } .peek-e { left: 1293px; top: 776px; } .peek-j { left: 1210px; top: 792px; letter-spacing: .15px; }

/* safari window */
.safari { position: absolute; left: 3px; top: 25px; width: 730px; height: 804px; border-radius: 10px; overflow: hidden; background: #fcfcfd; display: flex; flex-direction: column; font-family: Roboto, sans-serif; color: #07080a; }
.safari-bar { height: 53px; background: #e4e4e4; border-bottom: 1px solid #d0d0d0; display: flex; align-items: center; padding-left: 20px; flex: none; }
.dot { width: 12px; height: 12px; border-radius: 50%; background: #c9c9c9; border: 1px solid #adadad; margin-right: 8px; }
.sidebar-ic { margin-left: 18px; }
.vline { width: 1px; height: 18px; background: #d0d0d0; margin: 0 6px 0 7px; }
.nav-b { margin-left: 23px; } .nav-f { margin-left: 25px; }
.safari-url { margin-left: 29px; width: 294px; height: 27px; border: 1px solid #cbcbcb; border-radius: 7px; display: flex; align-items: center; justify-content: center; gap: 6px; font: 400 13px Inter, sans-serif; color: #4b4b4b; }
.workspace { display: flex; flex: 1; }
.chat { width: 462px; flex: none; font-size: 14px; display: flex; flex-direction: column; padding-top: 1px; white-space: nowrap; }
.ws-head { height: 38px; display: flex; align-items: center; padding: 0 0 2px 16px; }
.c1 { margin: 0 15px 0 4px; color: #5d6168; }
.app-name { margin: 0 15px 0 6px; }
.stop { width: 12px; height: 12px; border: 1.500px solid #a78bfa; background: #5b5e66; border-radius: 2px; }
.thread-head { height: 38px; display: flex; align-items: center; padding: 0 0 2px 14px; }
.thread-title { margin-left: 38px; width: 273px; letter-spacing: .07px; }
.agent { margin-left: 7px; width: 60px; height: 24px; border-radius: 12px; background: #fee1c3; color: #7a3d05; display: flex; align-items: center; justify-content: center; font-size: 12px; letter-spacing: .1px; }
.newchat { margin-left: 24px; }
.scroll-edge { height: 7px; margin: 0 10px; background: linear-gradient(#fcfcfd, #f5f5f6); border-radius: 0 0 8px 8px; }
.work { margin: 14px 10px 0; height: 34px; width: 442px; border-radius: 7px; background: #eff0f2; display: flex; align-items: center; padding: 0 11px 0 8px; font-size: 12px; color: #3b3f47; }
.work svg { width: 16px; height: 16px; margin-right: 8px; color: #4c5058; }
.work .wc, .actions svg { width: 12px; height: 12px; margin: 0 0 0 auto; color: #4c5058; }
.bubble { margin: 36px 0 0 48px; width: 400px; height: 56px; border-radius: 3px; background: #8ec2fd; padding: 6px 8px; line-height: 22px; }
.b2 { letter-spacing: .14px; }
.bubble.small { width: 86px; height: 34px; margin: 36px 0 0 362px; letter-spacing: .22px; }
.ago { height: 30px; line-height: 30px; width: 448px; text-align: right; font-size: 12px; color: #5d6168; }
.actions { margin: 17px 0 0 19px; width: 422px; height: 22px; display: flex; align-items: center; font-size: 12px; color: #3b3f47; }
.preview { margin: 1px 0 0 19px; height: 24px; line-height: 24px; color: #5d6168; letter-spacing: .075px; }
.decided { display: flex; align-items: center; gap: 6px; height: 22px; margin: 15px 0 0 15px; color: #3b3f47; letter-spacing: .07px; }
.reply { margin: 15px 0 0 16px; line-height: 22px; }
.reply p { margin: 0 0 16px; }
.r1 { letter-spacing: .08px; } .r2 { letter-spacing: .125px; } .r3 { letter-spacing: .06px; } .r5 { letter-spacing: .11px; }
.second { margin-top: 2px; }
.composer { margin: 22px 0 0 6px; width: 450px; height: 75px; border: 1px solid #b4b6ba; border-radius: 5px; padding: 7px 6px 6px; background: #fdfdfd; }
.ph { height: 22px; line-height: 22px; padding-left: 4px; color: #5d6168; letter-spacing: .1px; }
.tools { display: flex; align-items: center; height: 24px; margin-top: 14px; }
.build { width: 80px; height: 24px; background: #eff0f2; border-radius: 3px; display: flex; align-items: center; padding-left: 5px; font-size: 13px; }
.build em { margin: 0 11px 0 4px; letter-spacing: -.1px; }
.up { transform: rotate(180deg); color: #4c5058; }
.sel { margin-left: 8px; } .clip { margin-left: 12px; } .sliders { margin-left: 252px; } .send { margin-left: 18px; }
.side { flex: 1; display: flex; flex-direction: column; }
.side-head { height: 39px; padding-top: 10px; }
.panel { position: relative; width: 263px; height: 706px; border: 1px solid #9fa1a5; border-radius: 4px; background: #fcfcfd; }
.panel-tabs { height: 38px; border-bottom: 1px solid #c0c2c5; padding: 36px 0 0 8px; }
.panel-tabs i { display: block; width: 60px; height: 1px; background: #000; }
.timeline i { position: absolute; }
.ring { left: 6px; top: 58px; width: 9px; height: 9px; border: 1px dashed #555; border-radius: 50%; }
.dash { left: 10px; top: 69px; height: 120px; border-left: 1px dashed #999; }
.blue { left: 7px; top: 190px; width: 7px; height: 7px; border-radius: 50%; background: #0050b5; }
.line { left: 10px; top: 197px; height: 507px; border-left: 1px solid #b5b7ba; }
.g { width: 5px; height: 5px; border-radius: 50%; background: #5fc667; left: 8px; }
.g1 { top: 640px; } .g2 { top: 676px; }
.commit { position: absolute; left: 37px; top: 665px; display: flex; align-items: center; font-size: 14px; color: #51545b; height: 22px; }
.hash { width: 82px; letter-spacing: .4px; }
.av { width: 15px; height: 15px; border-radius: 50%; background: #c5c6cb; font-size: 6px; display: flex; align-items: center; justify-content: center; margin-right: 7px; }
.who { color: #2c2e33; letter-spacing: .15px; }

/* chrome window */
.chrome { position: absolute; left: 480px; top: 25px; width: 815px; height: 768px; border-radius: 10px; background: #d2e2fd; box-shadow: 0 0 1px #555, 0 14px 38px rgba(0,0,0,.52), 0 0 14px rgba(0,0,0,.16); display: flex; flex-direction: column; overflow: hidden; }
.tabstrip { height: 40px; display: flex; padding-left: 21px; flex: none; }
.tl { width: 12px; height: 12px; border-radius: 50%; margin: 14px 8px 0 0; }
.red { background: #fe4842; } .yel { background: #fdb90b; } .grn { background: #09c92c; }
.tab { position: relative; margin: 6px 0 0 11px; width: 232px; height: 34px; background: #fff; border-radius: 10px 10px 0 0; display: flex; align-items: center; padding: 0 11px 6px 9px; }
.tab::before, .tab::after { content: ""; position: absolute; bottom: 0; width: 10px; height: 10px; }
.tab::before { left: -10px; background: radial-gradient(circle at 0 0, transparent 9.500px, #fff 10px); }
.tab::after { right: -10px; background: radial-gradient(circle at 100% 0, transparent 9.500px, #fff 10px); }
.tab-title { font-size: 12px; margin: -1px 0 0 9px; width: 168px; color: #1e2124; white-space: nowrap; overflow: hidden; letter-spacing: .02px; -webkit-mask-image: linear-gradient(90deg, #000 86%, transparent 100%); }
.x { margin-left: auto; }
.plus { margin: 14px 0 0 14px; }
.toolbar { height: 47px; background: #fff; border-bottom: 1px solid #ddd; border-radius: 9px 9px 0 0; display: flex; align-items: center; padding: 0 6px 0 15px; flex: none; }
.t-fwd { margin-left: 22px; } .t-rel { margin-left: 22px; }
.omni { margin-left: 19px; width: 410px; height: 34px; border-radius: 17px; background: #ecf1fa; display: flex; align-items: center; padding: 0 16px 0 5px; }
.site { width: 24px; height: 24px; border-radius: 50%; background: #fff; display: flex; align-items: center; justify-content: center; }
.addr { margin: -2px 0 0 8px; font-size: 14px; color: #1e2124; letter-spacing: .02px; }
.bm { margin-left: auto; }
.ext { margin-left: 18px; }
.sep { width: 2px; height: 16px; background: #cddffc; margin: 0 17px 0 16px; }
.sep + .avatar { margin-left: -1px; }
.update { margin-left: auto; width: 123px; height: 34px; border-radius: 17px; background: #d2e2fd; color: #0a2463; font-size: 13px; font-weight: 400; letter-spacing: .06px; display: flex; align-items: center; justify-content: space-between; padding: 0 14px 0 12px; white-space: nowrap; }
.page { flex: 1; background: #0b0e0d; color: #fff; border: 1px solid #2c2f2e; border-top: 0; border-radius: 0 0 10px 10px; }
.site-nav { height: 65px; margin: 0 -1px; border-bottom: 1px solid #fff; display: flex; align-items: center; padding-left: 64px; font-size: 14px; font-weight: 500; }
.cat { width: 85px; margin-top: -2px; }
.brand { margin: -9px 0 0 41px; width: 184px; height: 36px; display: flex; align-items: baseline; font-family: "Liberation Serif", serif; font-weight: 400; line-height: 36px; letter-spacing: 0; text-shadow: 0 0 6px rgba(160,20,20,.3); }
.brand i { font-style: italic; }
.cc { font-size: 41px; width: 22px; transform: scaleX(.93); transform-origin: 0 0; } .mm { font-size: 42px; width: 41px; margin-left: 4px; transform: scaleX(1.22); transform-origin: 0 0; }
.urio, .arket { font-size: 19px; font-weight: 400; -webkit-text-stroke: .4px #fff; }
.urio { width: 51px; letter-spacing: .1px; } .arket { letter-spacing: -.1px; }
.site-nav > svg:not(.n-chev) { width: 16px; height: 16px; }
.n-heart { margin-left: 116px; } .n-msg, .n-user { margin-left: 32px; }
.events { margin: -2px 0 0 40px; width: 46px; } .n-cart { margin-left: 40px; }
.hero { height: 232px; padding-top: 78px; text-align: center; white-space: nowrap; }
.hero h1 { margin: 0; height: 72px; font: 700 67px/68px "Liberation Serif", serif; letter-spacing: -1.650px; -webkit-text-stroke: .5px #fff; }
.hero p { margin: 6px 0 0; font-size: 20px; line-height: 28px; }
.cards { display: grid; grid-template-columns: repeat(3, 1fr); gap: 24px; padding: 0 23px; height: 278px; }
.card { border: 1px solid #fff; border-radius: 8px; padding: 24px; display: flex; flex-direction: column; align-items: center; text-align: center; }
.card svg { width: 48px; height: 48px; color: #7c1013; margin-bottom: 16px; }
.card h3 { margin: 0 0 8px; font: 700 21px/28px "Liberation Serif", serif; white-space: nowrap; -webkit-text-stroke: .2px #fff; }
.card h3.sell { letter-spacing: .27px; }
.card p { margin: 0 0 16px; font-size: 16px; line-height: 24px; color: #f3f3f3; }
.btn { height: 40px; padding: 0 16px 2px; border: 1px solid #1e2322; border-radius: 6px; font-size: 14px; font-weight: 500; letter-spacing: -.04px; display: flex; align-items: center; white-space: nowrap; }
.primary { background: #a70228; border-color: #a70228; padding: 0 15.500px 2px; }

/* dock */
.dock { position: absolute; left: 45px; top: 830px; width: 1350px; height: 65px; border-radius: 18px; background: #555; border: 1px solid #767676; display: flex; padding: 0 2px; }
.app { position: relative; width: 54px; height: 63px; padding: 9px 7px 0; }
.app svg { width: 40px; height: 40px; }
.app svg svg { width: 13px; height: 15px; }
.app.wide { padding-left: 5px; }
.app.wide svg { width: 44px; }
.on::after { content: ""; position: absolute; left: 25px; top: 58px; width: 4px; height: 4px; border-radius: 1px; background: #000; }
.badge { position: absolute; right: 1px; top: 4px; width: 19px; height: 19px; border-radius: 50%; background: #f21414; color: #fff; font-size: 10px; display: flex; align-items: center; justify-content: center; }
.dsep { width: 1px; height: 46px; margin: 9px 11px 0 12px; background: #2b2b2b; flex: none; }
.cal-m { font: 600 7.500px Inter, sans-serif; fill: #fff; }
.cal-d { font: 300 24px Inter, sans-serif; fill: #333; letter-spacing: -1px; }
.tv { font: 500 17px Inter, sans-serif; fill: #fff; }
.sk { font: 700 27px Inter, sans-serif; fill: #fff; }
.exec { font: 6.800px "DejaVu Sans Mono", monospace; fill: #1fc53c; }
```
